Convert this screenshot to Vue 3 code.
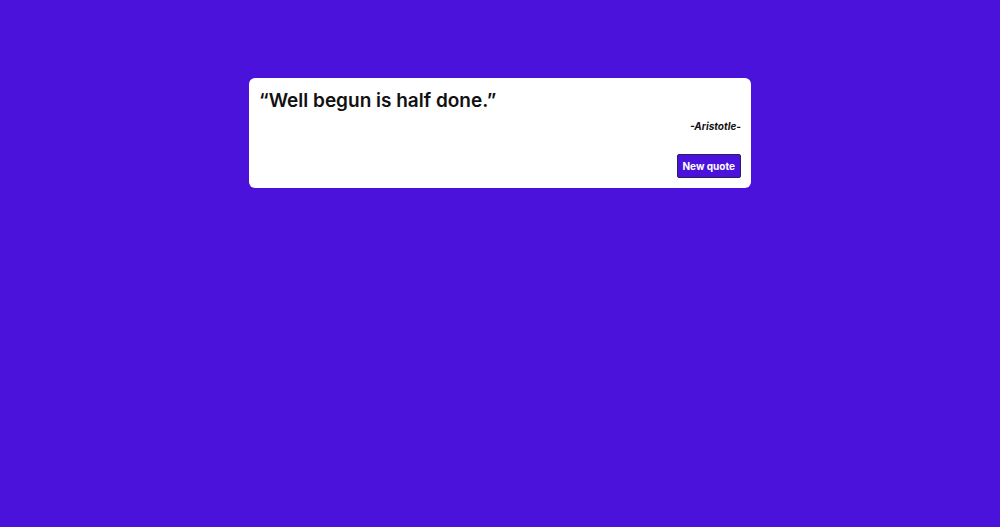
<script setup>
import { ref, computed } from 'vue'

const quotes = [
  { text: 'Well begun is half done.', author: 'Aristotle' },
  { text: 'Patience is bitter, but its fruit is sweet.', author: 'Aristotle' },
]
const index = ref(0)
const quote = computed(() => quotes[index.value])

function nextQuote() {
  index.value = (index.value + 1) % quotes.length
}
</script>

<template>
  <main class="page">
    <article class="card">
      <h1 class="quote">“{{ quote.text }}”</h1>
      <p class="author">-{{ quote.author }}-</p>
      <button class="next" type="button" @click="nextQuote">New quote</button>
    </article>
  </main>
</template>

<style>
body {
  background: #4b12dc;
}
</style>

<style scoped>
.page {
  box-sizing: border-box;
  min-height: 100vh;
  padding-top: 78px;
  font-family: Inter, "Liberation Sans", sans-serif;
  color: #111;
}

.card {
  box-sizing: border-box;
  display: flex;
  flex-direction: column;
  width: calc(50% + 2px);
  min-width: 300px;
  margin: 0 auto;
  padding: 10px;
  border-radius: 6px;
  background: #fff;
}

.quote {
  margin: 0;
  font-size: 19px;
  line-height: 26px;
  font-weight: 600;
}

.author {
  margin: 5px 0 21px;
  align-self: flex-end;
  font-size: 10px;
  line-height: 14px;
  font-weight: 700;
  font-style: italic;
}

.next {
  align-self: flex-end;
  height: 24px;
  padding: 0 5px;
  border: 1px solid #2a1f5c;
  border-radius: 2px;
  background: #4b12dc;
  color: #fff;
  font-family: inherit;
  font-size: 10px;
  font-weight: 700;
  cursor: pointer;
}
</style>
